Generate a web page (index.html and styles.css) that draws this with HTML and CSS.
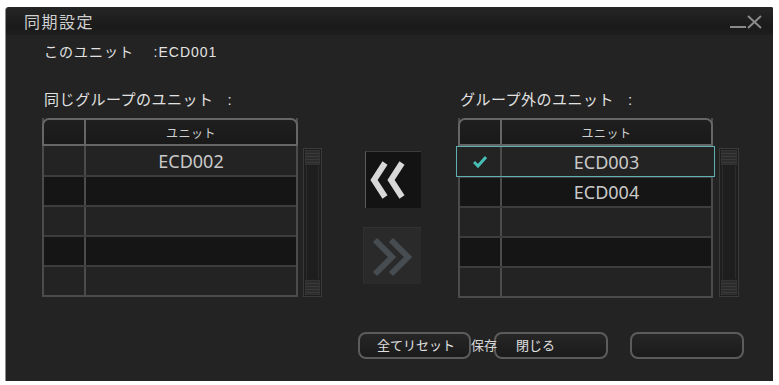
FILE: index.html
```html
<!DOCTYPE html>
<html lang="ja">
<head>
    <meta charset="UTF-8">
    <title>同期設定</title>
    <link rel="stylesheet" href="styles.css">
</head>
<body>
    <div class="dialog">
        <header class="titlebar">
            <span class="title">同期設定</span>
            <svg class="win-ctrl" width="34" height="16" viewBox="0 0 34 16">
                <line x1="0" y1="13" x2="16" y2="13" stroke="#8a8a8a" stroke-width="2"/>
                <line x1="18" y1="2" x2="31" y2="14" stroke="#8a8a8a" stroke-width="2"/>
                <line x1="31" y1="2" x2="18" y2="14" stroke="#8a8a8a" stroke-width="2"/>
            </svg>
        </header>

        <div class="content">
            <div class="info">このユニット&nbsp;&nbsp;&nbsp;&nbsp;:ECD001</div>

            <div class="panels">
                <section class="panel">
                    <div class="label">同じグループのユニット&nbsp;&nbsp;&nbsp;:</div>
                    <div class="list">
                        <div class="table">
                            <div class="thead">
                                <div class="c-check"></div>
                                <div class="c-name">ユニット</div>
                            </div>
                            <div class="row odd"><div class="c-check"></div><div class="c-name">ECD002</div></div>
                            <div class="row even"><div class="c-check"></div><div class="c-name"></div></div>
                            <div class="row odd"><div class="c-check"></div><div class="c-name"></div></div>
                            <div class="row even"><div class="c-check"></div><div class="c-name"></div></div>
                            <div class="row odd"><div class="c-check"></div><div class="c-name"></div></div>
                        </div>
                        <div class="scroll">
                            <div class="cap"></div>
                            <div class="track"></div>
                            <div class="cap"></div>
                        </div>
                    </div>
                </section>

                <section class="move">
                    <div class="arrow-btn">
                        <svg width="55" height="56" viewBox="0 0 55 56">
                            <polyline points="19,11 8,28 19,45" fill="none" stroke="#d8d8d8" stroke-width="6"/>
                            <polyline points="36,11 25,28 36,45" fill="none" stroke="#d8d8d8" stroke-width="6"/>
                        </svg>
                    </div>
                    <div class="arrow-btn disabled">
                        <svg width="57" height="56" viewBox="0 0 57 56">
                            <polyline points="11,12 28,29 11,46" fill="none" stroke="#464c50" stroke-width="6"/>
                            <polyline points="27,12 44,29 27,46" fill="none" stroke="#464c50" stroke-width="6"/>
                        </svg>
                    </div>
                </section>

                <section class="panel right">
                    <div class="label">グループ外のユニット&nbsp;&nbsp;&nbsp;:</div>
                    <div class="list">
                        <div class="table">
                            <div class="thead">
                                <div class="c-check"></div>
                                <div class="c-name">ユニット</div>
                            </div>
                            <div class="row odd selected">
                                <div class="c-check">
                                    <svg width="14" height="12" viewBox="0 0 14 12">
                                        <polyline points="1,6 5,10 13,1" fill="none" stroke="#46bdb5" stroke-width="3"/>
                                    </svg>
                                </div>
                                <div class="c-name">ECD003</div>
                            </div>
                            <div class="row even"><div class="c-check"></div><div class="c-name">ECD004</div></div>
                            <div class="row odd"><div class="c-check"></div><div class="c-name"></div></div>
                            <div class="row even"><div class="c-check"></div><div class="c-name"></div></div>
                            <div class="row odd"><div class="c-check"></div><div class="c-name"></div></div>
                        </div>
                        <div class="scroll">
                            <div class="cap"></div>
                            <div class="track"></div>
                            <div class="cap"></div>
                        </div>
                    </div>
                </section>
            </div>

            <div class="actions">
                <button class="btn">全てリセット</button>
                <span class="save">保存</span>
                <button class="btn">閉じる</button>
                <button class="btn blank"></button>
            </div>
        </div>
    </div>
</body>
</html>
```

FILE: styles.css
```css
body {
    margin: 0;
    background: #ffffff;
    font-family: "Noto Sans CJK JP", "Noto Sans", sans-serif;
    color: #dcdcdc;
}

.dialog {
    margin: 7px 0 0 5px;
    width: 768px;
    height: 374px;
    background: #232323;
    border-left: 1px solid #8c8c8c;
    border-radius: 4px 2px 0 0;
    box-sizing: border-box;
}

.titlebar {
    height: 28px;
    display: flex;
    align-items: center;
    justify-content: space-between;
    padding: 0 9px 0 18px;
    background: linear-gradient(#262626, #1a1a1a 70%, #1e1e1e);
    border-radius: 4px 2px 0 0;
}

.title {
    font-size: 16px;
    letter-spacing: 1.5px;
    color: #cfcfcf;
}

.win-ctrl {
    margin-top: 2px;
}

.content {
    padding: 7px 0 0 36px;
}

.info,
.label {
    height: 20px;
    line-height: 20px;
    font-family: "Liberation Sans", "Noto Sans CJK JP", sans-serif;
    font-size: 15px;
    letter-spacing: 0.5px;
    padding-left: 2px;
    color: #e2e2e2;
    white-space: nowrap;
}

.info {
    font-size: 14px;
    letter-spacing: 1px;
}

.panels {
    display: flex;
    margin-top: 28px;
}

.panel.right {
    margin-left: 37px;
}

.label {
    margin-bottom: 8px;
}

.list {
    display: flex;
    gap: 5px;
}

.table {
    width: 256px;
    border: 2px solid #4b4b4b;
    border-top: none;
    box-sizing: border-box;
}

.right .table {
    width: 255px;
}

.thead {
    display: flex;
    height: 28px;
    border: 2px solid #666666;
    border-radius: 7px 7px 0 0;
    margin: 0 -2px;
    background: linear-gradient(#1f1f1f, #191919);
    box-sizing: border-box;
    color: #cccccc;
}

.thead .c-check {
    border-right: 2px solid #666666;
}

.row {
    display: flex;
    height: 30px;
    border-top: 2px solid #3d3d3d;
    box-sizing: border-box;
}

.thead + .row {
    border-top: none;
    height: 29px;
}

.row.odd {
    background: #232323;
}

.row.even {
    background: #151515;
}

.row.selected {
    outline: 1px solid #5fb1b1;
    outline-offset: 0;
    margin: 1px -3px 0 -3px;
    padding: 0 3px;
}

.c-check {
    width: 40px;
    flex: none;
    display: flex;
    align-items: center;
    justify-content: center;
    border-right: 2px solid #4b4b4b;
}

.c-name {
    flex: 1;
    display: flex;
    align-items: center;
    justify-content: center;
    font-family: "Noto Sans", sans-serif;
    font-size: 18px;
    color: #c9c9c9;
}

.thead .c-name {
    font-family: "Noto Sans CJK JP", sans-serif;
    font-size: 12px;
    letter-spacing: 0.5px;
    color: #d0d0d0;
}

.scroll {
    margin-top: 30px;
    width: 19px;
    height: 149px;
    border: 1px solid #3a3a3a;
    background: #1e1e1e;
    display: flex;
    flex-direction: column;
    box-sizing: border-box;
}

.right .scroll {
    width: 20px;
    margin-left: 1px;
}

.cap {
    height: 13px;
    margin: 1px;
    border: 1px solid #333333;
    background: repeating-linear-gradient(#2c2c2c 0 2px, #3a3a3a 2px 3px);
}

.track {
    flex: 1;
    margin: 0 2px;
    border-left: 1px solid #2c2c2c;
    border-right: 1px solid #2c2c2c;
}

.move {
    margin-left: 41px;
    padding-top: 61px;
    display: flex;
    flex-direction: column;
    gap: 19px;
}

.arrow-btn {
    width: 55px;
    height: 56px;
    background: #131313;
    border-left: 1px solid #5a5a5a;
    border-top: 1px solid #3c3c3c;
    margin-left: 2px;
}

.arrow-btn.disabled {
    width: 57px;
    margin-left: 0;
    background: #2a2a2a;
    border-left: 1px solid #303030;
    border-top: 1px solid #333333;
}

.arrow-btn svg {
    display: block;
}

.actions {
    display: flex;
    align-items: center;
    margin: 34px 0 0 316px;
}

.btn {
    width: 113px;
    height: 27px;
    border: 2px solid #5c5c5c;
    border-radius: 8px;
    background: linear-gradient(#262626, #1b1b1b);
    color: #e0e0e0;
    font-family: "Noto Sans CJK JP", sans-serif;
    font-size: 13px;
    text-align: left;
    padding: 0 0 2px 17px;
    box-sizing: border-box;
}

.btn + .save + .btn {
    width: 114px;
    padding-left: 20px;
}

.btn.blank {
    width: 114px;
    margin-left: 22px;
}

.save {
    width: 23px;
    position: relative;
    z-index: 1;
    white-space: nowrap;
    font-size: 13px;
    color: #d8d8d8;
    margin-top: -3px;
}
```
